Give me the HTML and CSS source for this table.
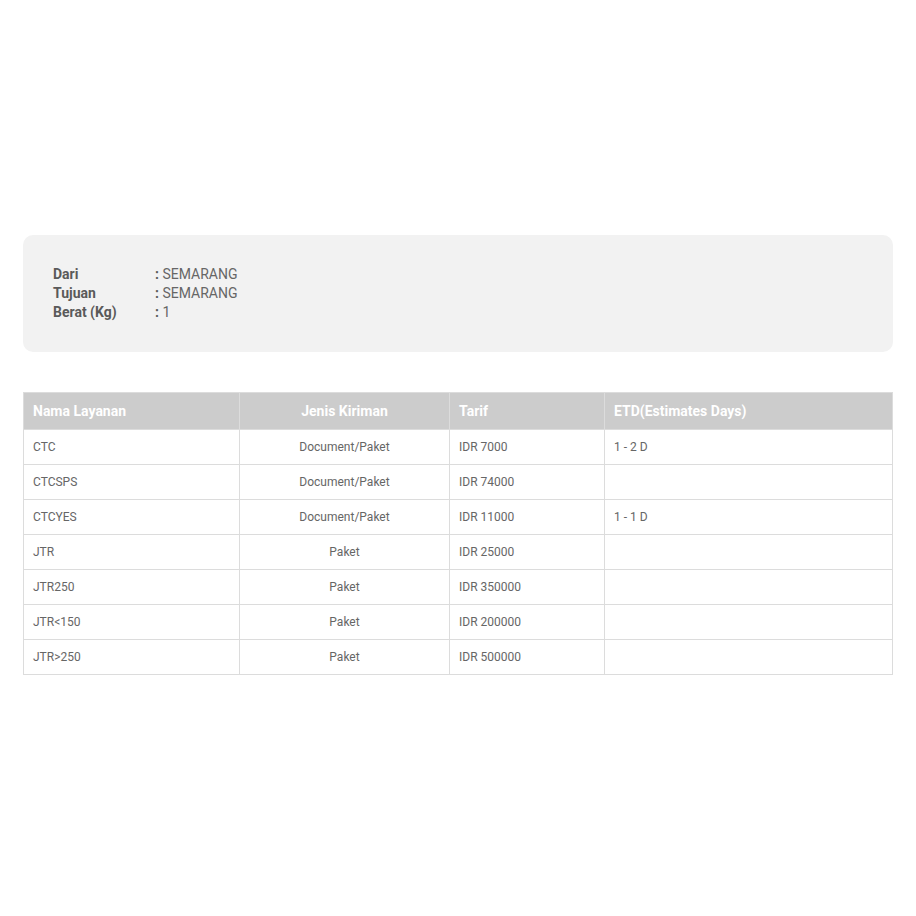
FILE: index.html
```html
<!DOCTYPE html>
<html>
<head>
<meta charset="utf-8">
<link rel="stylesheet" href="styles.css">
</head>
<body>
<div class="page">
  <div class="info">
    <div class="info-row"><span class="info-label">Dari</span><span class="info-value"><b class="colon">:</b> SEMARANG</span></div>
    <div class="info-row"><span class="info-label">Tujuan</span><span class="info-value"><b class="colon">:</b> SEMARANG</span></div>
    <div class="info-row"><span class="info-label">Berat (Kg)</span><span class="info-value"><b class="colon">:</b> 1</span></div>
  </div>
  <table class="rates">
    <colgroup>
      <col class="c1"><col class="c2"><col class="c3"><col class="c4">
    </colgroup>
    <thead>
      <tr><th>Nama Layanan</th><th class="center">Jenis Kiriman</th><th>Tarif</th><th>ETD(Estimates Days)</th></tr>
    </thead>
    <tbody>
      <tr><td>CTC</td><td class="center">Document/Paket</td><td>IDR 7000</td><td>1 - 2 D</td></tr>
      <tr><td>CTCSPS</td><td class="center">Document/Paket</td><td>IDR 74000</td><td></td></tr>
      <tr><td>CTCYES</td><td class="center">Document/Paket</td><td>IDR 11000</td><td>1 - 1 D</td></tr>
      <tr><td>JTR</td><td class="center">Paket</td><td>IDR 25000</td><td></td></tr>
      <tr><td>JTR250</td><td class="center">Paket</td><td>IDR 350000</td><td></td></tr>
      <tr><td>JTR&lt;150</td><td class="center">Paket</td><td>IDR 200000</td><td></td></tr>
      <tr><td>JTR&gt;250</td><td class="center">Paket</td><td>IDR 500000</td><td></td></tr>
    </tbody>
  </table>
</div>
</body>
</html>
```
FILE: styles.css
```css
html, body {
  margin: 0;
  padding: 0;
  background: #ffffff;
}
body {
  font-family: Roboto, "Liberation Sans", Arial, sans-serif;
  color: #666666;
}
.page {
  padding: 235px 23px 0 23px;
}
.info {
  background: #f2f2f2;
  border-radius: 10px;
  padding: 30px 30px 30px 30px;
  font-size: 14px;
  line-height: 19px;
}
.info-row {
  display: flex;
}
.info-label {
  width: 102px;
  font-weight: bold;
  color: #5a5a5a;
}
.info-value {
  color: #666666;
}
.colon {
  font-weight: bold;
  color: #5a5a5a;
}
.rates {
  margin-top: 40px;
  width: 869px;
  border-collapse: collapse;
  table-layout: fixed;
  font-size: 12px;
}
.c1 { width: 216px; }
.c2 { width: 210px; }
.c3 { width: 155px; }
.c4 { width: 288px; }
.rates th, .rates td {
  border: 1px solid #dcdcdc;
  padding: 0 9px;
  text-align: left;
}
.rates th {
  background: #cccccc;
  color: #ffffff;
  font-size: 14px;
  font-weight: bold;
  height: 36px;
}
.rates td {
  height: 34px;
  color: #666666;
}
.rates .center {
  text-align: center;
}
```
